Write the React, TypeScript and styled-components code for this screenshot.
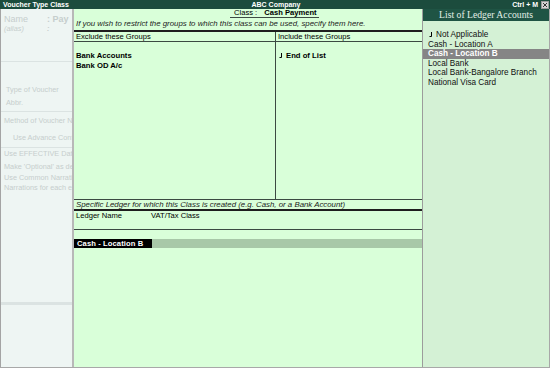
import styled, { createGlobalStyle } from "styled-components";

const GlobalStyle = createGlobalStyle`
  html, body { margin: 0; padding: 0; background: #ffffff; }
  body { font-family: "Liberation Sans", Arial, sans-serif; }
`;

const Window = styled.div`
  width: 550px;
  height: 368px;
  display: flex;
  flex-direction: column;
  overflow: hidden;
  font-family: "Liberation Sans", Arial, sans-serif;
  color: #000;
`;

const TitleBar = styled.div`
  height: 9px;
  flex: none;
  background: #1c4c3d;
  color: #ffffff;
  font-size: 7px;
  font-weight: bold;
  line-height: 9px;
  display: grid;
  grid-template-columns: 1fr auto 1fr;
  align-items: center;
  padding: 0 1px 0 3px;
`;

const TitleRight = styled.div`
  display: flex;
  justify-content: flex-end;
  align-items: center;
  gap: 3px;
`;

const CloseBox = styled.span`
  width: 8px;
  height: 8px;
  display: flex;
  background: #d4d4d4;
  border: 1px solid #9a9a9a;
  box-sizing: border-box;
  svg { display: block; }
`;

const Body = styled.div`
  flex: 1;
  display: flex;
  min-height: 0;
  border-bottom: 1px solid #a8a8a8;
`;

/* faded form behind the popup */
const LeftPanel = styled.div`
  width: 74px;
  flex: none;
  box-sizing: border-box;
  border-left: 1px solid #a4a4a4;
  border-right: 2px solid #b8b8b8;
  background: #eef5f3;
  display: flex;
  flex-direction: column;
  overflow: hidden;
  white-space: nowrap;
  color: #c6cecd;
`;

const Field = styled.div<{ $top: number; $indent?: number; $size?: number; $italic?: boolean }>`
  margin-top: ${(p) => p.$top}px;
  padding-left: ${(p) => p.$indent ?? 3}px;
  font-size: ${(p) => p.$size ?? 7.3}px;
  font-style: ${(p) => (p.$italic ? "italic" : "normal")};
  line-height: 10px;
  height: 10px;
  display: flex;
  overflow: hidden;
`;

const FieldValue = styled.span`
  margin-left: auto;
  width: 25px;
  font-weight: bold;
`;

const FadedRule = styled.div<{ $top: number; $weight?: number }>`
  margin-top: ${(p) => p.$top}px;
  height: ${(p) => p.$weight ?? 1}px;
  background: #dbe3e2;
  flex: none;
`;

const MainPanel = styled.div`
  width: 349px;
  flex: none;
  box-sizing: border-box;
  background: #d9ffd9;
  border-right: 1px solid #9c9c9c;
  display: flex;
  flex-direction: column;
  font-size: 7.6px;
`;

const ClassRow = styled.div`
  height: 9px;
  padding-left: 156px;
  display: flex;
  align-items: flex-start;
`;

const ClassTitle = styled.div`
  display: flex;
  gap: 7px;
  height: 8px;
  line-height: 8px;
  padding: 0 2px 0 4px;
  border-bottom: 1px solid #3e4a44;
  b { font-weight: bold; }
`;

const Note = styled.div<{ $height: number }>`
  height: ${(p) => p.$height}px;
  line-height: ${(p) => p.$height}px;
  padding-left: 2px;
  font-style: italic;
  font-size: 7.85px;
  color: #1a1a1a;
  border-bottom: 2px solid #1e1e1e;
  white-space: nowrap;
`;

const Groups = styled.div`
  height: 167px;
  flex: none;
  display: grid;
  grid-template-columns: 202px 1fr;
`;

const GroupColumn = styled.div<{ $divider?: boolean }>`
  border-right: ${(p) => (p.$divider ? "1px solid #3c4a42" : "none")};
  display: flex;
  flex-direction: column;
`;

const ColumnHead = styled.div`
  height: 9px;
  line-height: 9px;
  padding-left: 2px;
  border-bottom: 1px solid #3c4a42;
`;

const GroupList = styled.div`
  padding: 9px 0 0 2px;
  display: flex;
  flex-direction: column;
`;

const GroupItem = styled.div`
  height: 10px;
  line-height: 10px;
  font-weight: bold;
  font-size: 7.7px;
  display: flex;
  align-items: center;
`;

const Marker = styled.span`
  width: 8px;
  height: 10px;
  display: flex;
  align-items: flex-start;
  padding-top: 2px;
  box-sizing: border-box;
  svg { display: block; }
`;

const Specific = styled.div`
  border-top: 1px solid #3c4a42;
  display: flex;
  flex-direction: column;
`;

const LedgerHead = styled.div`
  height: 18px;
  border-bottom: 1px solid #3c4a42;
  display: grid;
  grid-template-columns: 75px 1fr;
  padding-left: 2px;
  line-height: 9px;
`;

const Spacer = styled.div`
  height: 9px;
`;

const SelectRow = styled.div`
  height: 9px;
  display: flex;
  background: #a8c8a8;
`;

const SelectValue = styled.div`
  width: 75px;
  background: #000000;
  color: #ffffff;
  font-weight: bold;
  line-height: 9px;
  padding-left: 3px;
  letter-spacing: 0.1px;
`;

const RightPanel = styled.div`
  flex: 1;
  background: #d4f1d5;
  border-right: 1px solid #a8a8a8;
  display: flex;
  flex-direction: column;
  font-size: 8.2px;
`;

const ListHeader = styled.div`
  height: 12px;
  line-height: 12px;
  background: #1f5444;
  color: #e2efe6;
  text-align: center;
  font-family: "Liberation Serif", "Times New Roman", serif;
  font-size: 9.7px;
`;

const Ledgers = styled.div`
  padding-top: 9px;
  display: flex;
  flex-direction: column;
`;

const Ledger = styled.div<{ $active?: boolean }>`
  height: 9.5px;
  line-height: 9.5px;
  padding-left: 5px;
  display: flex;
  align-items: center;
  white-space: nowrap;
  background: ${(p) => (p.$active ? "#858585" : "transparent")};
  color: ${(p) => (p.$active ? "#ffffff" : "#101010")};
  font-weight: ${(p) => (p.$active ? "bold" : "normal")};
`;

const EndMark = () => (
  <Marker>
    <svg width="5" height="5" viewBox="0 0 5 5">
      <path d="M3.5 0V4.5H1.5" fill="none" stroke="#000" strokeWidth="1" />
    </svg>
  </Marker>
);

const ledgers = [
  "Cash - Location A",
  "Cash - Location B",
  "Local Bank",
  "Local Bank-Bangalore Branch",
  "National Visa Card",
];

export default function App() {
  return (
    <Window>
      <GlobalStyle />
      <TitleBar>
        <span>Voucher Type Class</span>
        <span>ABC Company</span>
        <TitleRight>
          <span>Ctrl + M</span>
          <CloseBox>
            <svg width="6" height="6" viewBox="0 0 6 6">
              <path d="M1 1L5 5M5 1L1 5" stroke="#333" strokeWidth="1" />
            </svg>
          </CloseBox>
        </TitleRight>
      </TitleBar>
      <Body>
        <LeftPanel>
          <Field $top={5} $size={9}>
            Name<FieldValue>: Pay</FieldValue>
          </Field>
          <Field $top={0} $italic>
            (alias)<FieldValue>:</FieldValue>
          </Field>
          <FadedRule $top={27} />
          <Field $top={23} $indent={5}>Type of Voucher</Field>
          <Field $top={3} $indent={5}>Abbr.</Field>
          <FadedRule $top={3} />
          <Field $top={4}>Method of Voucher Numbering</Field>
          <Field $top={7} $indent={12}>Use Advance Configuration</Field>
          <FadedRule $top={4} />
          <Field $top={1}>Use EFFECTIVE Dates for Vouchers</Field>
          <Field $top={3}>Make 'Optional' as default</Field>
          <Field $top={1}>Use Common Narration</Field>
          <Field $top={0}>Narrations for each entry</Field>
          <FadedRule $top={109} $weight={3} />
        </LeftPanel>

        <MainPanel>
          <ClassRow>
            <ClassTitle>
              <span>Class :</span>
              <b>Cash Payment</b>
            </ClassTitle>
          </ClassRow>
          <Note $height={12}>
            If you wish to restrict the groups to which this class can be used, specify them here.
          </Note>
          <Groups>
            <GroupColumn $divider>
              <ColumnHead>Exclude these Groups</ColumnHead>
              <GroupList>
                <GroupItem>Bank Accounts</GroupItem>
                <GroupItem>Bank OD A/c</GroupItem>
              </GroupList>
            </GroupColumn>
            <GroupColumn>
              <ColumnHead>Include these Groups</ColumnHead>
              <GroupList>
                <GroupItem>
                  <EndMark />
                  End of List
                </GroupItem>
              </GroupList>
            </GroupColumn>
          </Groups>
          <Specific>
            <Note $height={9}>
              Specific Ledger for which this Class is created (e.g. Cash, or a Bank Account)
            </Note>
            <LedgerHead>
              <span>Ledger Name</span>
              <span>VAT/Tax Class</span>
            </LedgerHead>
            <Spacer />
            <SelectRow>
              <SelectValue>Cash - Location B</SelectValue>
            </SelectRow>
          </Specific>
        </MainPanel>

        <RightPanel>
          <ListHeader>List of Ledger Accounts</ListHeader>
          <Ledgers>
            <Ledger>
              <EndMark />
              Not Applicable
            </Ledger>
            {ledgers.map((name) => (
              <Ledger key={name} $active={name === "Cash - Location B"}>
                {name}
              </Ledger>
            ))}
          </Ledgers>
        </RightPanel>
      </Body>
    </Window>
  );
}
